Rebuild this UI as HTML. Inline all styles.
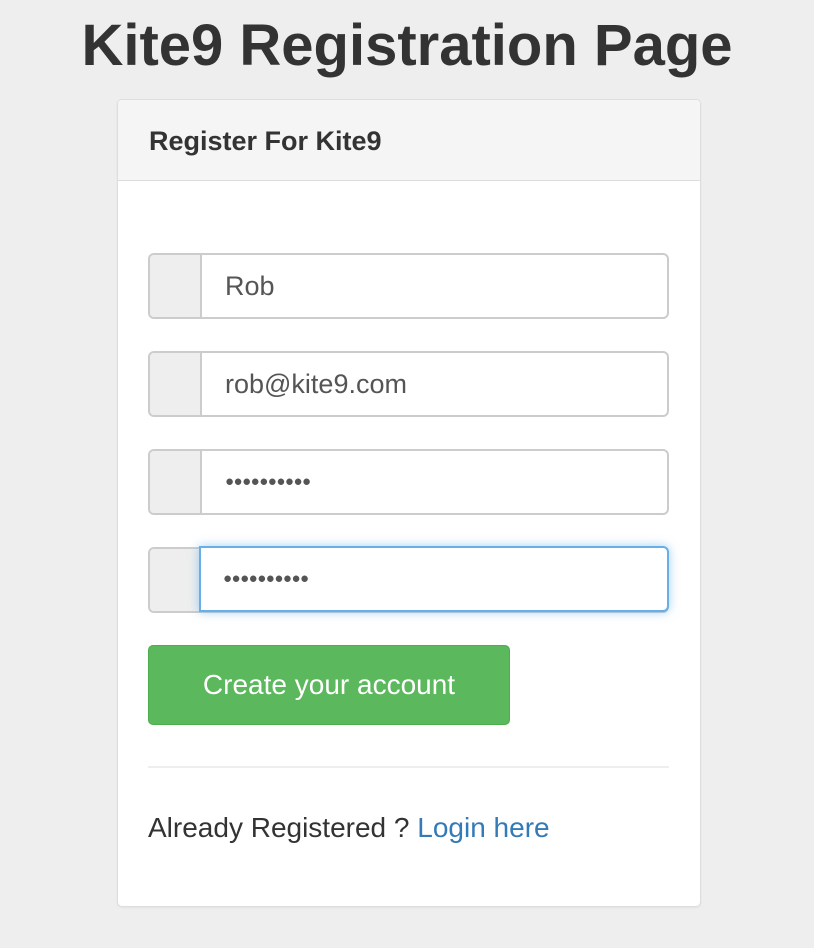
<!DOCTYPE html>
<html><head><meta charset="utf-8"><style>
body{margin:0;width:814px;height:948px;background:#eee;font-family:"Liberation Sans",Arial,sans-serif;position:relative;overflow:hidden;color:#333}
h1{position:absolute;top:12px;left:0;width:814px;text-align:center;margin:0;font-size:58px;font-weight:bold;line-height:68px;color:#333}
.panel{position:absolute;left:117px;top:99px;width:582px;height:806px;background:#fff;border:1px solid #ddd;border-radius:5px;box-shadow:0 1px 2px rgba(0,0,0,.05)}
.hd{height:81px;background:#f5f5f5;border-bottom:1px solid #ddd;border-radius:5px 5px 0 0;box-sizing:border-box;padding-left:31px;font-weight:bold;font-size:27px;line-height:82px;color:#333}
.grp{position:absolute;left:30px;width:521px;height:66px;box-sizing:border-box;border:2px solid #ccc;border-radius:6px;background:#fff}
.grp .ad{position:absolute;left:0;top:0;bottom:0;width:50px;background:#eee;border-right:2px solid #ccc;border-radius:4px 0 0 4px}
.grp .tx{position:absolute;left:75px;top:0;line-height:62px;font-size:27px;color:#555}
.dots{font-size:15px !important;letter-spacing:-0.5px}
.focus{position:absolute;left:81px;top:446px;width:470px;height:66px;box-sizing:border-box;border:2px solid #66afe9;border-radius:0 6px 6px 0;box-shadow:0 0 10px rgba(102,175,233,.6);background:#fff}
.btn{position:absolute;left:30px;top:545px;width:362px;height:80px;box-sizing:border-box;background:#5cb85c;border:1px solid #4cae4c;border-radius:5px;color:#fff;font-size:28px;text-align:center;line-height:78px}
.hr{position:absolute;left:30px;top:666px;width:521px;height:2px;background:#eee}
.lg{position:absolute;left:30px;top:708px;font-size:28px;line-height:40px;color:#333}
.lg span{color:#337ab7}
</style></head><body>
<h1>Kite9 Registration Page</h1>
<div class="panel">
<div class="hd">Register For Kite9</div>
<div class="grp" style="top:153px"><div class="ad"></div><div class="tx">Rob</div></div>
<div class="grp" style="top:251px"><div class="ad"></div><div class="tx">rob@kite9.com</div></div>
<div class="grp" style="top:349px"><div class="ad"></div><div class="tx dots">●●●●●●●●●●</div></div>
<div class="grp" style="top:447px"><div class="ad"></div></div>
<div class="focus"><div class="dots" style="position:absolute;left:22px;top:0;line-height:62px;color:#555">●●●●●●●●●●</div></div>
<div class="btn">Create your account</div>
<div class="hr"></div>
<div class="lg">Already Registered ? <span>Login here</span></div>
</div>
</body></html>
